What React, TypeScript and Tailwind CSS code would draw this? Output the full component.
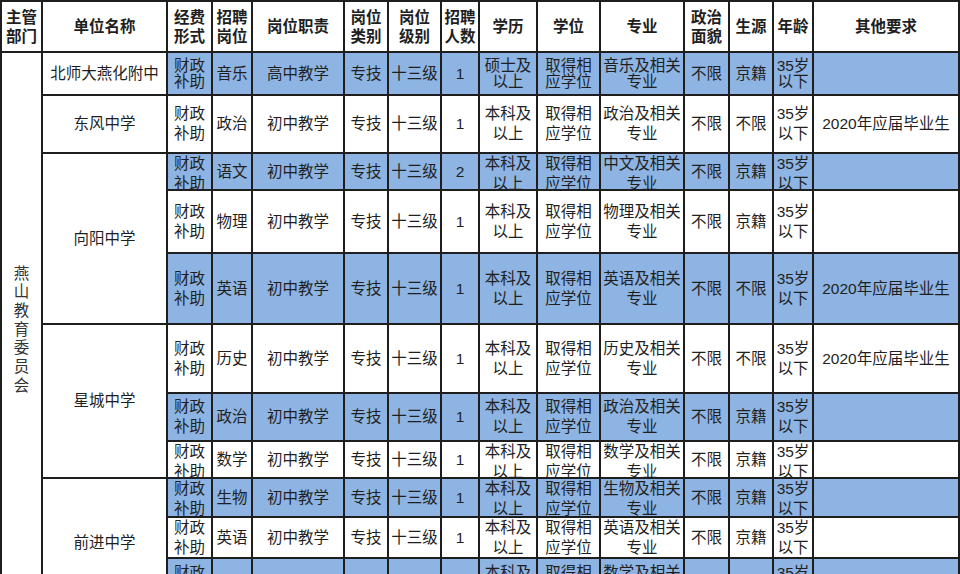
import React from 'react';

type Row = {
  blue: boolean;
  cells: string[]; // 经费形式 … 其他要求 (13 columns)
  lead?: string;
};

const HEADERS = [
  '主管|部门', '单位名称', '经费|形式', '招聘|岗位', '岗位职责', '岗位|类别', '岗位|级别',
  '招聘|人数', '学历', '学位', '专业', '政治|面貌', '生源', '年龄', '其他要求',
];

const row = (post: string, n: string, edu: string, major: string, src: string, other: string, blue: boolean, lead?: string): Row => ({
  blue,
  lead,
  cells: ['财政|补助', post, post === '音乐' ? '高中教学' : '初中教学', '专技', '十三级', n, edu, '取得相|应学位', major, '不限', src, '35岁|以下', other],
});

const ROWS: Row[] = [
  row('音乐', '1', '硕士及|以上', '音乐及相关|专业', '京籍', '', true, 'leading-[16px]'),
  row('政治', '1', '本科及|以上', '政治及相关|专业', '不限', '2020年应届毕业生', false),
  row('语文', '2', '本科及|以上', '中文及相关|专业', '京籍', '', true),
  row('物理', '1', '本科及|以上', '物理及相关|专业', '京籍', '', false),
  row('英语', '1', '本科及|以上', '英语及相关|专业', '不限', '2020年应届毕业生', true),
  row('历史', '1', '本科及|以上', '历史及相关|专业', '不限', '2020年应届毕业生', false),
  row('政治', '1', '本科及|以上', '政治及相关|专业', '京籍', '', true),
  row('数学', '1', '本科及|以上', '数学及相关|专业', '京籍', '', false),
  row('生物', '1', '本科及|以上', '生物及相关|专业', '京籍', '', true),
  row('英语', '1', '本科及|以上', '英语及相关|专业', '京籍', '', false),
  row('数学', '1', '本科及|以上', '数学及相关|专业', '京籍', '', true),
];

// 单位名称 with grid-row placement
const UNITS = [
  { name: '北师大燕化附中', cls: 'row-start-2 row-end-3' },
  { name: '东风中学', cls: 'row-start-3 row-end-4' },
  { name: '向阳中学', cls: 'row-start-4 row-end-7' },
  { name: '星城中学', cls: 'row-start-7 row-end-10' },
  { name: '前进中学', cls: 'row-start-10 row-end-13' },
];

const ROW_START = [
  'row-start-2', 'row-start-3', 'row-start-4', 'row-start-5', 'row-start-6', 'row-start-7',
  'row-start-8', 'row-start-9', 'row-start-10', 'row-start-11', 'row-start-12',
];

function Lines({ text }: { text: string }) {
  const parts = text.split('|');
  return (
    <span>
      {parts.map((p, i) => (
        <React.Fragment key={i}>
          {p}
          {i < parts.length - 1 && <br />}
        </React.Fragment>
      ))}
    </span>
  );
}

const cellBase =
  'flex justify-center [align-items:safe_center] text-center overflow-hidden whitespace-nowrap';

export default function App() {
  return (
    <div
      className="w-[960px] h-[574px] overflow-hidden bg-white text-[15.5px] text-[#1f1f1f]"
      style={{ fontFamily: '"Liberation Sans", "Noto Sans CJK SC", sans-serif' }}
    >
      <div className="grid grid-cols-[39px_123px_43px_38px_90px_42px_51px_36px_56px_61px_82px_43px_42px_38px_144px] grid-rows-[49px_41px_56px_35px_61px_69px_67px_46px_35px_37px_39px_48px] gap-[2px] p-[2px] bg-[#1e1e1e] w-[960px]">
        {/* Header */}
        {HEADERS.map((h) => (
          <div key={h} className={`${cellBase} bg-white font-bold leading-[19px] row-start-1`}>
            <Lines text={h} />
          </div>
        ))}

        {/* 主管部门 */}
        <div className="col-start-1 row-start-2 row-end-13 bg-white flex items-center justify-center">
          <div className="w-[16px] leading-[18.7px] text-center text-[#333]">燕山教育委员会</div>
        </div>

        {/* 单位名称 */}
        {UNITS.map((u) => (
          <div key={u.name} className={`col-start-2 ${u.cls} ${cellBase} bg-white`}>
            {u.name}
          </div>
        ))}

        {/* Data */}
        {ROWS.map((r, ri) =>
          r.cells.map((c, ci) => (
            <div
              key={`${ri}-${ci}`}
              className={`${ROW_START[ri]} ${cellBase} ${r.lead ?? 'leading-[20px]'} ${
                r.blue ? 'bg-[#8db4e2]' : 'bg-white'
              }`}
              style={{ gridColumnStart: ci + 3 }}
            >
              <Lines text={c} />
            </div>
          ))
        )}
      </div>
    </div>
  );
}
